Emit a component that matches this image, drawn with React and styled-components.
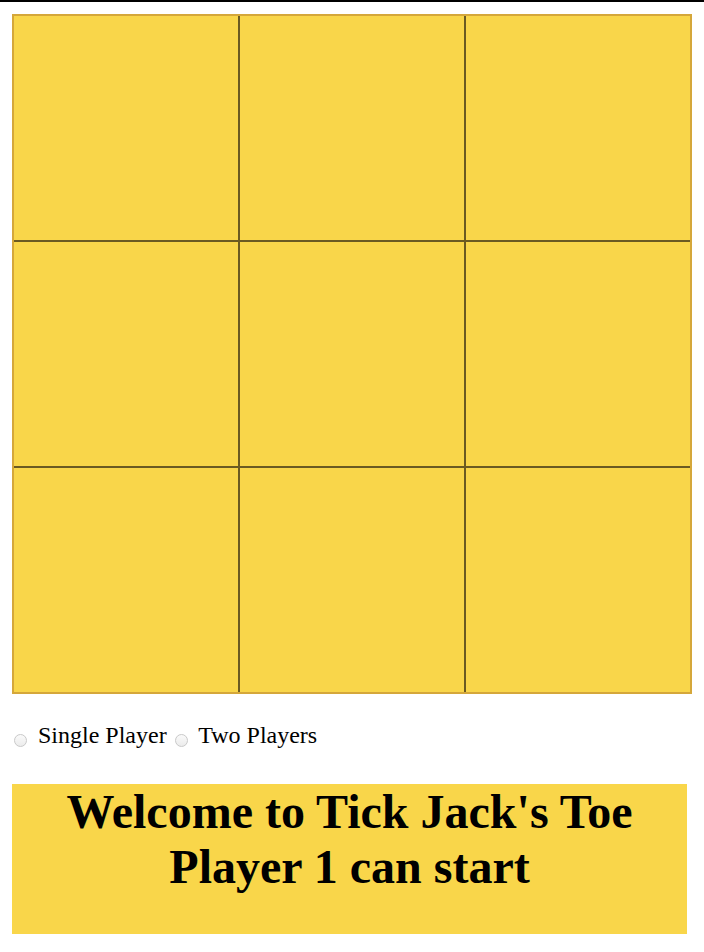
import React, { useState } from "react";
import styled, { createGlobalStyle } from "styled-components";

const GlobalStyle = createGlobalStyle`
  html {
    border-top: 2px solid #000;
  }
  body {
    margin: 8px;
    font-family: "Liberation Serif", "Times New Roman", serif;
    color: #000;
    background: #fff;
  }
`;

const Page = styled.div`
  padding: 4px 4px 0;
`;

const Board = styled.div`
  width: 680px;
  height: 680px;
  box-sizing: border-box;
  border: 2px solid #d5a73a;
  background: #6b5a22;
  display: grid;
  grid-template-columns: repeat(3, 1fr);
  grid-template-rows: repeat(3, 1fr);
  gap: 2px;
`;

const Cell = styled.div`
  background: #f9d64a;
  cursor: pointer;
  display: flex;
  align-items: center;
  justify-content: center;
  font-size: 120px;
  font-weight: bold;
`;

const Modes = styled.form`
  margin: 28px 0 35px;
  font-size: 24px;
  line-height: normal;
`;

const Radio = styled.input`
  appearance: none;
  width: 13px;
  height: 13px;
  margin: 0 5px 0 2px;
  border: 1px solid #c9c9c9;
  border-radius: 50%;
  background: linear-gradient(#fafafa, #ececec);
  box-sizing: border-box;
  vertical-align: -4px;

  &:checked {
    background: radial-gradient(circle, #3a7bd5 0 3px, #fff 3.5px);
    border-color: #3a7bd5;
  }
`;

const Status = styled.div`
  width: 675px;
  height: 150px;
  background: #f9d64a;
  text-align: center;
`;

const Title = styled.h1`
  margin: 0;
  font-size: 48px;
  font-weight: bold;
  line-height: normal;
`;

export default function App() {
  const [cells, setCells] = useState(Array(9).fill(""));
  const [mode, setMode] = useState("");
  const [player, setPlayer] = useState(1);

  const play = i => {
    if (cells[i]) return;
    const next = [...cells];
    next[i] = player === 1 ? "X" : "O";
    setCells(next);
    setPlayer(player === 1 ? 2 : 1);
  };

  return (
    <Page>
      <GlobalStyle />
      <Board>
        {cells.map((c, i) => (
          <Cell key={i} onClick={() => play(i)}>
            {c}
          </Cell>
        ))}
      </Board>
      <Modes>
        <Radio
          type="radio"
          name="mode"
          checked={mode === "single"}
          onChange={() => setMode("single")}
        />{" "}
        Single Player{" "}
        <Radio
          type="radio"
          name="mode"
          checked={mode === "two"}
          onChange={() => setMode("two")}
        />{" "}
        Two Players
      </Modes>
      <Status>
        <Title>
          Welcome to Tick Jack's Toe
          <br />
          Player {player} can start
        </Title>
      </Status>
    </Page>
  );
}
